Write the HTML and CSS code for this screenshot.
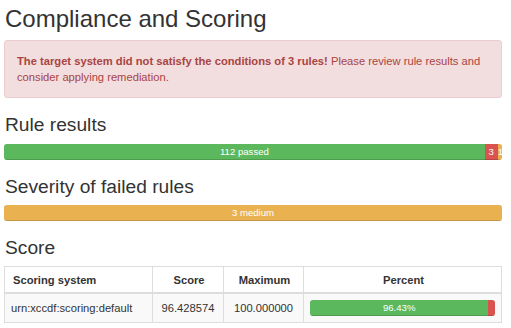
FILE: index.html
```html
<!DOCTYPE html>
<html lang="en">
<head>
    <meta charset="UTF-8">
    <meta name="viewport" content="width=device-width, initial-scale=1.0">
    <title>Compliance and Scoring</title>
    <link rel="stylesheet" href="styles.css">
</head>
<body>
    <div class="report">
        <h2>Compliance and Scoring</h2>
        <div class="alert">
            <strong>The target system did not satisfy the conditions of 3 rules!</strong>
            Please review rule results and consider applying remediation.
        </div>

        <h3>Rule results</h3>
        <div class="progress">
            <div class="bar bar-pass" style="width: 96.55%">112 passed</div>
            <div class="bar bar-fail" style="width: 2.59%">3 failed</div>
            <div class="bar bar-other" style="width: 0.86%">1 other</div>
        </div>

        <h3>Severity of failed rules</h3>
        <div class="progress">
            <div class="bar bar-other" style="width: 100%">3 medium</div>
        </div>

        <h3>Score</h3>
        <table class="score">
            <thead>
                <tr>
                    <th class="col-system">Scoring system</th>
                    <th class="col-score">Score</th>
                    <th class="col-max">Maximum</th>
                    <th class="col-percent">Percent</th>
                </tr>
            </thead>
            <tbody>
                <tr>
                    <td class="system">urn:xccdf:scoring:default</td>
                    <td class="num">96.428574</td>
                    <td class="num">100.000000</td>
                    <td>
                        <div class="progress progress-cell">
                            <div class="bar bar-pass" style="width: 96.43%">96.43%</div>
                            <div class="bar bar-fail" style="width: 3.57%"></div>
                        </div>
                    </td>
                </tr>
            </tbody>
        </table>
    </div>
</body>
</html>
```

FILE: styles.css
```css
body{
    margin: 0;
    font-family: "Liberation Sans", Helvetica, Arial, sans-serif;
    font-size: 11.2px;
    line-height: 16px;
    color: #333;
    background-color: white;
}

.report{
    width: 498px;
    padding: 6px 0 0 4px;
}

h2{
    font-size: 24px;
    font-weight: 500;
    line-height: 1.1;
    margin: 0 0 8px 1px;
}

h3{
    font-size: 19.2px;
    font-weight: 500;
    line-height: 1.1;
    margin: 16px 0 8px 1px;
}

.alert{
    padding: 12px;
    margin-bottom: 16px;
    border: 1px solid #ebccd1;
    border-radius: 3px;
    background-color: #f2dede;
    color: #a94442;
}

.progress{
    display: flex;
    height: 16px;
    margin-bottom: 16px;
    overflow: hidden;
    border-radius: 3px;
    background-color: #f5f5f5;
    box-shadow: inset 0 1px 2px rgba(0,0,0,0.1);
}

.bar{
    flex: none;
    height: 16px;
    overflow: hidden;
    font-size: 9.6px;
    line-height: 16px;
    color: white;
    text-align: center;
    box-shadow: inset 0 -1px 0 rgba(0,0,0,0.15);
}

.bar-pass{
    background-color: #5cb85c;
}

.bar-fail{
    background-color: #d9534f;
}

.bar-other{
    background-color: #e9b150;
}

.score{
    width: 498px;
    table-layout: fixed;
    border-collapse: collapse;
    border-spacing: 0;
}

.score th,
.score td{
    box-sizing: border-box;
    border: 1px solid #ddd;
    padding: 5px 6px;
    line-height: 16px;
    color: #333;
    text-align: center;
}

.score th{
    font-weight: bold;
    padding: 5px 6px 4px 8px;
    border-bottom-width: 2px;
}

.score th.col-system,
.score td.system{
    text-align: left;
}

.score tbody tr{
    background-color: #f9f9f9;
}

.score td{
    padding: 6px;
}

.col-system{
    width: 148px;
}

.col-score{
    width: 71px;
}

.col-max{
    width: 80px;
}

.progress-cell{
    margin-bottom: 0;
}
```
